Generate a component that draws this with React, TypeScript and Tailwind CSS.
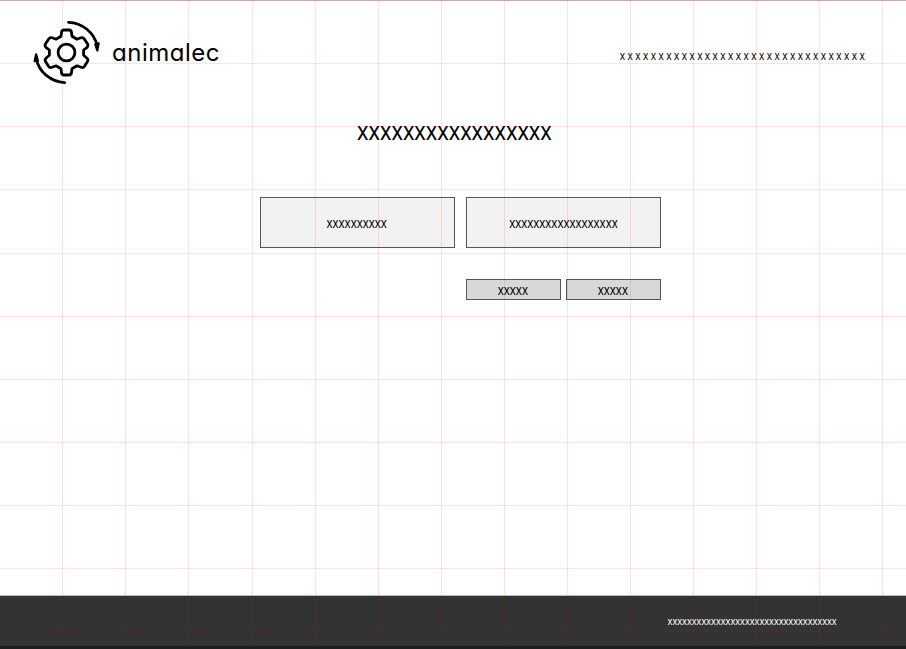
const columns = [62, 125, 188, 252, 315, 378, 441, 504, 567, 630, 693, 756, 819, 882];
const rows = [63, 126, 189, 253, 316, 379, 442, 505, 568, 631];

function GridOverlay() {
  return (
    <svg className="pointer-events-none absolute inset-x-0 -top-px" width="906" height="646" shapeRendering="crispEdges">
      {columns.map((x) => (
        <rect key={x} x={x} y="0" width="1" height="646" fill="#ff0000" fillOpacity="0.12" />
      ))}
      {rows.map((y) => (
        <rect key={y} x="0" y={y} width="906" height="1" fill="#ff0000" fillOpacity="0.11" />
      ))}
    </svg>
  );
}

function Logo() {
  return (
    <svg width="70" height="66" viewBox="32 20 70 66" fill="none" stroke="#000" strokeWidth="2.8" strokeLinecap="round" strokeLinejoin="round">
      <circle cx="66.5" cy="52.5" r="8.4" />
      <path d="M61.5 32.5Q61.8 30 64 30H69Q71.2 30 71.5 32.5L72 36.2L77 39.2L80.8 37.8Q83 37 84.3 39L87.6 44Q88.6 46 86.8 47.6L83.6 50V55.3L86.8 58Q88.6 59.5 87.5 61.4L84.5 66.3Q83.2 68.2 81 67.3L77 65.8L72 68.8L71.5 72.5Q71.2 75 69 75H64Q61.8 75 61.5 72.5L61 68.8L56 65.8L52 67.3Q49.8 68.2 48.5 66.3L45.5 61.4Q44.4 59.5 46.2 58L49.4 55.3V50L46.2 47.6Q44.4 46 45.4 44L48.7 39Q50 37 52.2 37.8L56 39.2L61 36.2Z" />
      <path d="M68.5 22.3C82 22.7 94.5 32.5 97.2 46" />
      <path d="M95.2 44.2L97.3 50.5L98.7 43.4Z" fill="#000" strokeWidth="2.2" />
      <path d="M64.7 82.6C51 82 38.8 72 36.4 59" />
      <path d="M34.6 61.2L36.1 54.4L37.9 60.7Z" fill="#000" strokeWidth="2.2" />
    </svg>
  );
}

const box = "flex h-[51px] items-center justify-center border border-[#555] bg-[#f2f2f2] text-[15px]";
const button = "flex h-[21px] items-center justify-center border border-[#555] bg-[#d8d8d8] text-[15px] leading-[19px]";
const label = "relative right-px scale-x-[0.76]";

export default function App() {
  return (
    <div className="relative flex h-[649px] w-[906px] flex-col overflow-hidden border-t border-[#c8aaaa] bg-white font-['Noto_Sans',sans-serif] text-black">
      <header className="flex h-[107px] items-start justify-between pt-[19px] pr-[39px] pl-[32px]">
        <div className="flex items-center">
          <Logo />
          <span className="ml-[10px] font-['Inter',sans-serif] text-[24px] leading-[66px] tracking-[0.5px] [font-feature-settings:'cv11']">animalec</span>
        </div>
        <nav className="mt-[26px] origin-right scale-x-[0.8] text-[12.5px] leading-[20px] tracking-[3.05px] whitespace-nowrap">xxxxxxxxxxxxxxxxxxxxxxxxxxxxxxxx</nav>
      </header>
      <main className="flex flex-1 flex-col items-center">
        <h1 className="mt-[8px] ml-[2px] scale-x-[0.866] text-[25px] leading-[28px]">xxxxxxxxxxxxxxxxx</h1>
        <div className="mt-[53px] ml-[15px] grid w-[401px] grid-cols-2 gap-x-[11px]">
          <div className={box}><span className={label}>xxxxxxxxxx</span></div>
          <div className={box}><span className="scale-x-[0.76]">xxxxxxxxxxxxxxxxxx</span></div>
          <div className="col-start-2 mt-[31px] grid grid-cols-2 gap-[5px]">
            <button className={button}><span className={label}>xxxxx</span></button>
            <button className={button}><span className={label}>xxxxx</span></button>
          </div>
        </div>
      </main>
      <footer className="flex h-[54px] justify-end border-t border-b-[3px] border-t-[#bbb] border-b-[#1e1e1e] bg-[#333] pr-[69px] text-[11px] leading-[50px] text-white"><span className="origin-right scale-x-[0.83]">xxxxxxxxxxxxxxxxxxxxxxxxxxxxxxxxxxx</span></footer>
      <GridOverlay />
    </div>
  );
}
